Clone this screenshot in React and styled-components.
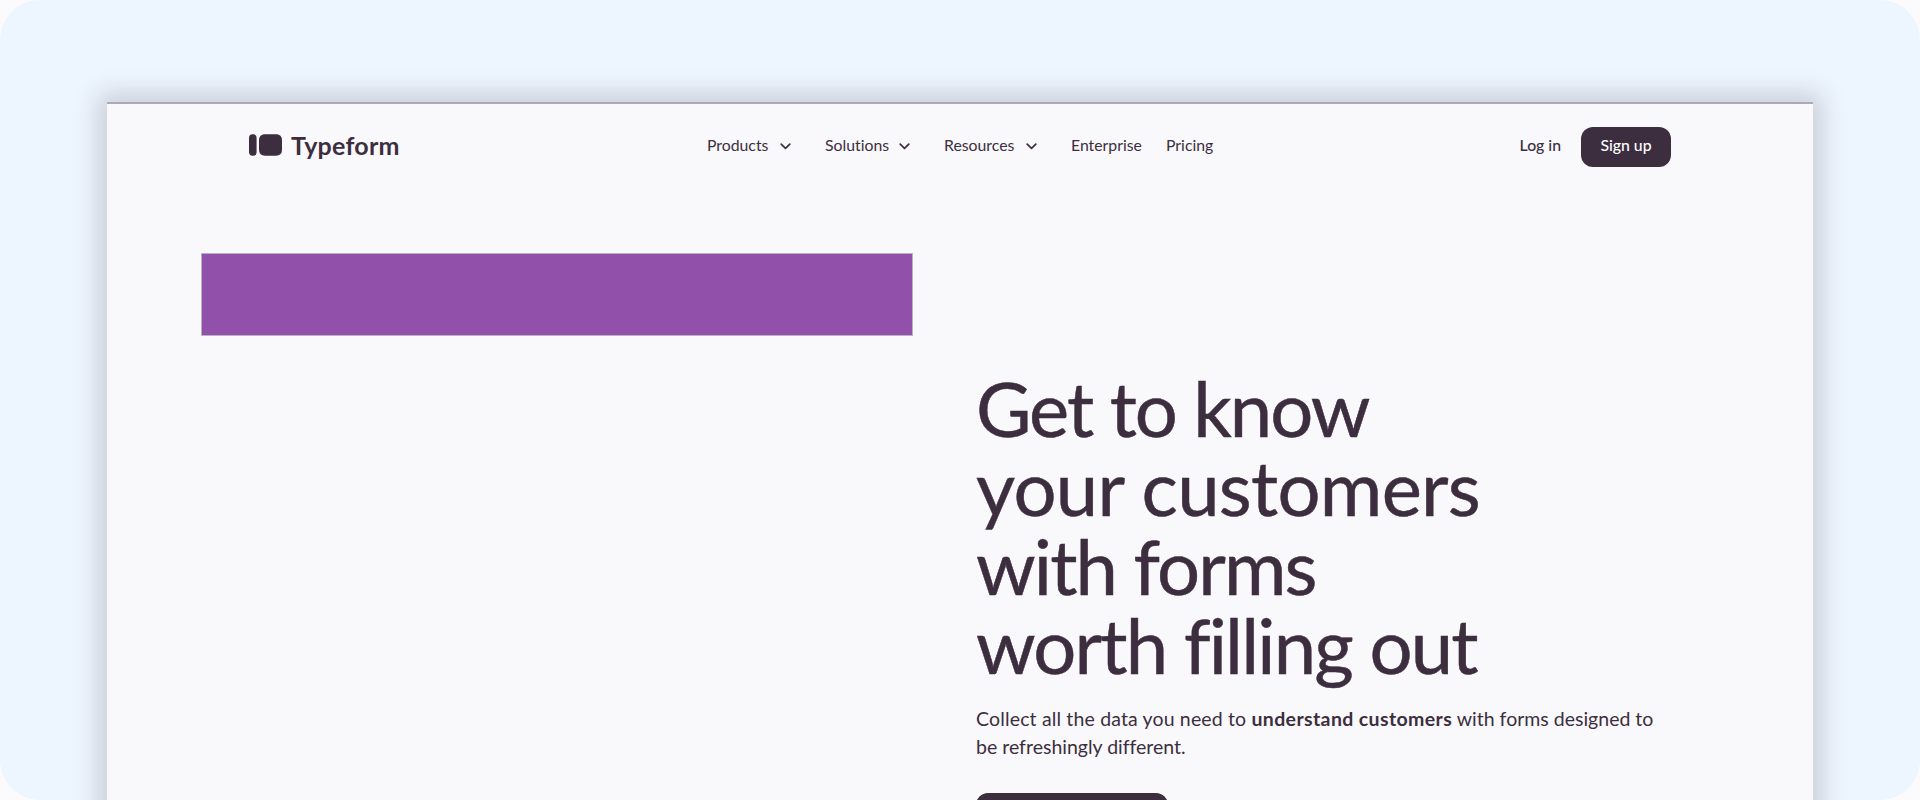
import React from "react";
import styled, {createGlobalStyle} from "styled-components";

const GlobalStyle = createGlobalStyle`
  *{
    box-sizing: border-box;
  }
  body{
    margin: 0;
    background: #fbfbfd;
    color: #3d2e3f;
    font-family: Lato, "Liberation Sans", sans-serif;
    font-variant-ligatures: none;
  }
`
const Stage = styled.div`
  display: flex;
  height: 800px;
  padding: 102px 107px 0;
  overflow: hidden;
  border-radius: 40px;
  background: #edf5ff;
`
const Page = styled.div`
  flex: 1;
  height: 760px;
  border-top: 2px solid #b0a8b5;
  background: #f9f9fb;
  box-shadow: 0 0 24px 8px rgba(35,30,30,0.18);
`
const Header = styled.header`
  display: grid;
  grid-template-columns: 458px 1fr auto;
  align-items: center;
  height: 85px;
  padding: 0 142px;
`
const Logo = styled.a`
  display: flex;
  align-items: center;
  gap: 9px;
  padding-bottom: 4px;
  font-size: 25px;
  font-weight: 700;
  line-height: 30px;
  letter-spacing: 0.25px;
  svg{
    display: block;
  }
`
const Nav = styled.nav`
  display: flex;
  align-items: center;
  padding-bottom: 3px;
  font-size: 15.8px;
  line-height: 20px;
`
const NavItem = styled.a`
  display: flex;
  align-items: center;
  justify-content: space-between;
  width: ${props => props.$width}px;
  margin-right: ${props => props.$gap}px;
  white-space: nowrap;
  svg{
    margin-top: 3px;
  }
`
const Actions = styled.div`
  display: flex;
  align-items: center;
  gap: 20px;
  font-size: 15.8px;
  line-height: 20px;
  font-weight: 500;
`
const Login = styled.a`
  padding-bottom: 3px;
`
const SignUp = styled.button`
  width: 90px;
  height: 40px;
  padding: 0 0 3px;
  border: none;
  border-radius: 12px;
  background: #3d2e3f;
  color: #fff;
  font: inherit;
`
const Hero = styled.main`
  display: grid;
  grid-template-columns: 712px 1fr;
  column-gap: 63px;
  padding: 64px 94px 0;
`
const Banner = styled.div`
  height: 83px;
  border: 1px solid #b9b2be;
  background: #9150a9;
`
const Content = styled.section`
  padding-top: 115px;
`
const Title = styled.h1`
  margin: 0;
  font-size: 76px;
  font-weight: 400;
  line-height: 79px;
  -webkit-text-stroke: 0.5px #3d2e3f;
`
const Line = styled.span`
  display: block;
  letter-spacing: ${props => props.$spacing}px;
  white-space: nowrap;
`
const Text = styled.p`
  margin: 21px 0 0;
  font-size: 19.5px;
  line-height: 28px;
  white-space: nowrap;
  .lead{
    letter-spacing: 0.15px;
  }
  strong{
    letter-spacing: 0.38px;
  }
`
const StartButton = styled.button`
  display: block;
  width: 192px;
  height: 48px;
  margin-top: 32px;
  border: none;
  border-radius: 12px;
  background: #3d2e3f;
`

const menu = [
    {title: "Products", width: 84, gap: 34, dropdown: true},
    {title: "Solutions", width: 85, gap: 34, dropdown: true},
    {title: "Resources", width: 93, gap: 34, dropdown: true},
    {title: "Enterprise", width: 71, gap: 24},
    {title: "Pricing", width: 47, gap: 0},
];

const lines = [
    {text: "Get to know", spacing: -2},
    {text: "your customers", spacing: -0.7},
    {text: "with forms", spacing: -1.9},
    {text: "worth filling out", spacing: -1.85},
];

const Chevron = () => (
    <svg width="11" height="7" viewBox="0 0 11 7" fill="none" stroke="#3d2e3f" strokeWidth="1.7"
         strokeLinecap="round" strokeLinejoin="round">
        <path d="M1.2 1.2L5.5 5.4L9.8 1.2"/>
    </svg>
)

const App = () => {
    return (
        <>
            <GlobalStyle/>
            <Stage>
                <Page>
                    <Header>
                        <Logo>
                            <svg width="33" height="22" viewBox="0 0 33 22" fill="#3d2e3f">
                                <rect x="0" y="0.3" width="7.6" height="21.4" rx="3.6"/>
                                <path d="M16.2 0.2H26.8C31 0.2 33 2.4 33 6.4V15.6C33 19.6 31 21.8 26.8 21.8H16.2C12 21.8 10 19.6 10 15.6V6.4C10 2.4 12 0.2 16.2 0.2Z"/>
                            </svg>
                            Typeform
                        </Logo>
                        <Nav>
                            {menu.map(item => (
                                <NavItem key={item.title} $width={item.width} $gap={item.gap}>
                                    {item.title}
                                    {item.dropdown ? <Chevron/> : null}
                                </NavItem>
                            ))}
                        </Nav>
                        <Actions>
                            <Login>Log in</Login>
                            <SignUp>Sign up</SignUp>
                        </Actions>
                    </Header>
                    <Hero>
                        <Banner/>
                        <Content>
                            <Title>
                                {lines.map(line => (
                                    <Line key={line.text} $spacing={line.spacing}>{line.text}</Line>
                                ))}
                            </Title>
                            <Text>
                                <span className={"lead"}>Collect all the data you need to </span>
                                <strong>understand customers</strong> with forms designed to<br/>
                                be refreshingly different.
                            </Text>
                            <StartButton/>
                        </Content>
                    </Hero>
                </Page>
            </Stage>
        </>
    )
}
export default App;
